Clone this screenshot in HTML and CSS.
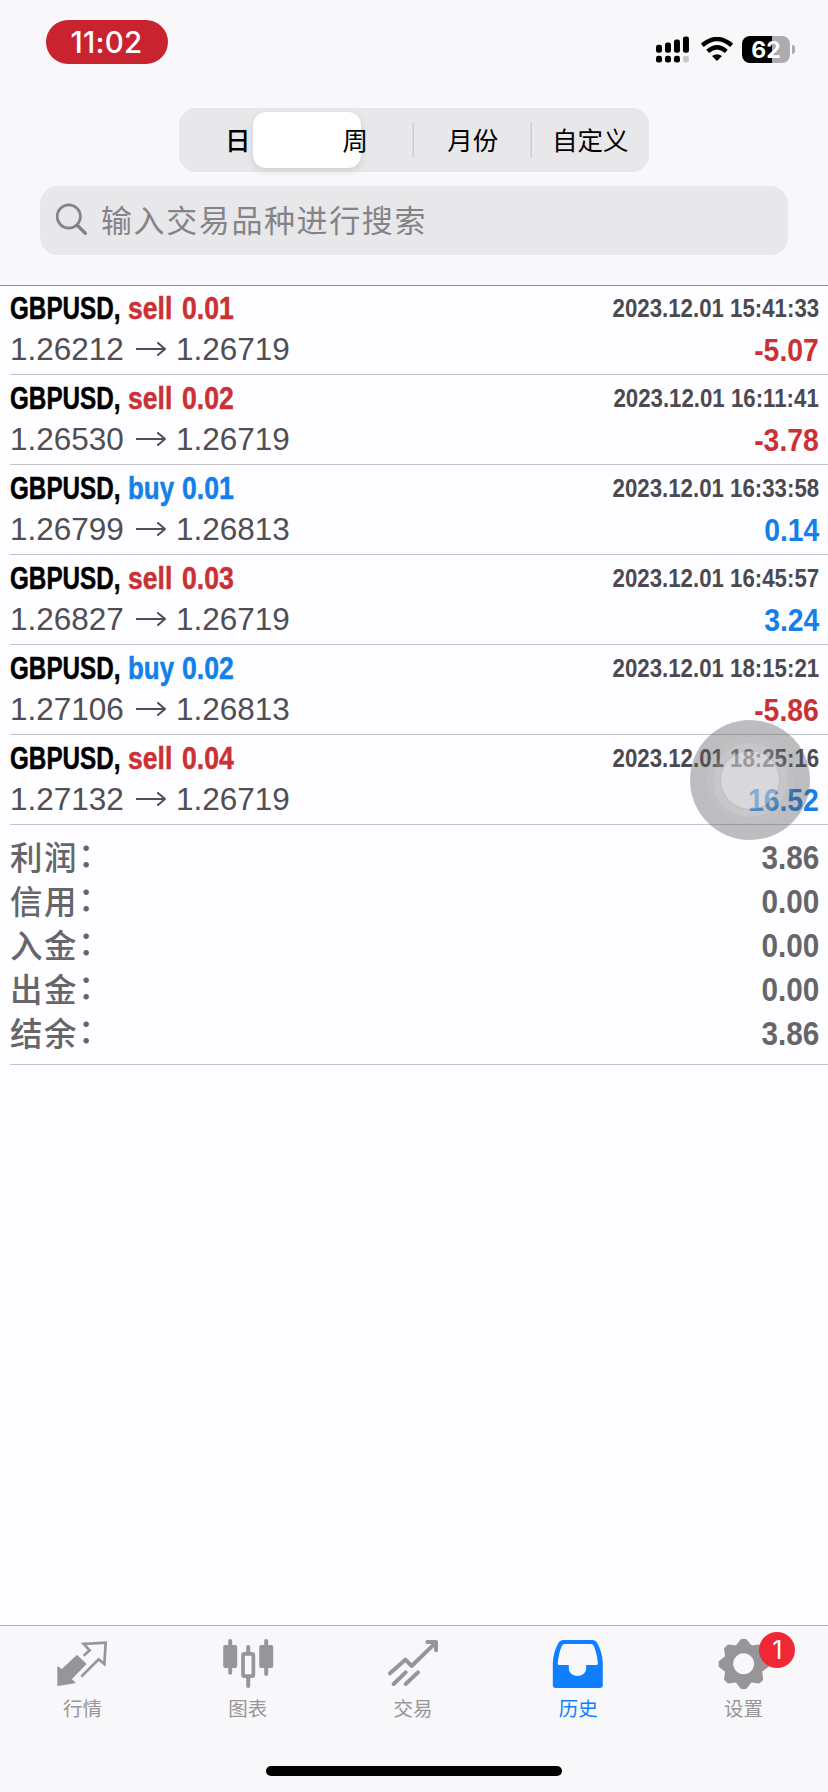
FILE: index.html
```html
<!DOCTYPE html>
<html lang="zh-CN">
<head>
<meta charset="utf-8">
<title>历史</title>
<link rel="stylesheet" href="styles.css">
</head>
<body>
<div class="screen">
  <header class="top">
    <div class="status">
      <div class="clock">11:02</div>
      <div class="indicators">
        <svg class="signal" viewBox="0 0 100 80">
          <g><rect x="0" y="26" width="18" height="24" rx="7"/><rect x="27" y="19" width="18" height="31" rx="7"/><rect x="54" y="10" width="18" height="40" rx="7"/><rect x="81" y="1" width="18" height="49" rx="7"/>
          <rect x="0" y="59" width="18" height="20" rx="7"/><rect x="27" y="59" width="18" height="20" rx="7"/><rect x="54" y="59" width="18" height="20" rx="7"/></g><rect x="81" y="59" width="18" height="20" rx="8" fill="#c9c7cb"/>
        </svg>
        <svg class="wifi" viewBox="0 0 96 72"><g fill="none" stroke="#000" stroke-width="13"><path d="M4 25Q48-13 92 25"/><path d="M20 43Q48 18 76 43"/></g><path d="M48 72L33 57Q48 46 63 57Z"/></svg>
        <div class="battery">62</div>
        <div class="battery-cap"></div>
      </div>
    </div>
    <div class="segments">
      <div class="thumb"></div>
      <div class="seg seg-on">日</div><div class="seg">周</div><div class="seg seg-line">月份</div><div class="seg seg-line">自定义</div>
    </div>
    <div class="search">
      <svg class="lens" viewBox="0 0 92 92"><circle cx="38" cy="37" r="34.500"/><path d="M63 63L87 87" stroke-width="10"/></svg>
      <span>输入交易品种进行搜索</span>
    </div>
  </header>
  <main class="list">
    <div class="deal"><div class="title"><b class="sym">GBPUSD,</b><b class="side sell">sell</b><b class="lot sell">0.01</b></div><div class="date">2023.12.01 15:41:33</div><div class="price">1.26212<svg class="arrow" viewBox="0 0 30 14"><path d="M0 7H29M22 1L29 7L22 13"/></svg>1.26719</div><div class="sum sell">-5.07</div></div>
    <div class="deal"><div class="title"><b class="sym">GBPUSD,</b><b class="side sell">sell</b><b class="lot sell">0.02</b></div><div class="date">2023.12.01 16:11:41</div><div class="price">1.26530<svg class="arrow" viewBox="0 0 30 14"><path d="M0 7H29M22 1L29 7L22 13"/></svg>1.26719</div><div class="sum sell">-3.78</div></div>
    <div class="deal"><div class="title"><b class="sym">GBPUSD,</b><b class="side side-buy buy">buy</b><b class="lot buy">0.01</b></div><div class="date">2023.12.01 16:33:58</div><div class="price">1.26799<svg class="arrow" viewBox="0 0 30 14"><path d="M0 7H29M22 1L29 7L22 13"/></svg>1.26813</div><div class="sum buy">0.14</div></div>
    <div class="deal"><div class="title"><b class="sym">GBPUSD,</b><b class="side sell">sell</b><b class="lot sell">0.03</b></div><div class="date">2023.12.01 16:45:57</div><div class="price">1.26827<svg class="arrow" viewBox="0 0 30 14"><path d="M0 7H29M22 1L29 7L22 13"/></svg>1.26719</div><div class="sum buy">3.24</div></div>
    <div class="deal"><div class="title"><b class="sym">GBPUSD,</b><b class="side side-buy buy">buy</b><b class="lot buy">0.02</b></div><div class="date">2023.12.01 18:15:21</div><div class="price">1.27106<svg class="arrow" viewBox="0 0 30 14"><path d="M0 7H29M22 1L29 7L22 13"/></svg>1.26813</div><div class="sum sell">-5.86</div></div>
    <div class="deal"><div class="title"><b class="sym">GBPUSD,</b><b class="side sell">sell</b><b class="lot sell">0.04</b></div><div class="date">2023.12.01 18:25:16</div><div class="price">1.27132<svg class="arrow" viewBox="0 0 30 14"><path d="M0 7H29M22 1L29 7L22 13"/></svg>1.26719</div><div class="sum buy">16.52</div></div>
    <div class="totals">
      <div class="total"><span>利润<i>：</i></span><b>3.86</b></div>
      <div class="total"><span>信用<i>：</i></span><b>0.00</b></div>
      <div class="total"><span>入金<i>：</i></span><b>0.00</b></div>
      <div class="total"><span>出金<i>：</i></span><b>0.00</b></div>
      <div class="total"><span>结余<i>：</i></span><b>3.86</b></div>
    </div>
  </main>
  <footer class="bottom">
    <nav class="tabs">
      <div class="tab">
        <svg class="icon" viewBox="164 78 168 168"><path fill="currentColor" stroke="currentColor" stroke-width="4" stroke-linejoin="round" d="M173 171L184 180L230 137L256 162L212 207L223 218L173 226Z"/><path fill="none" stroke="currentColor" stroke-width="8" d="M250 137L268 121L250 102L316 98L312 162L295 148L243 200"/></svg>
        <span>行情</span></div>
      <div class="tab">
        <svg class="icon" viewBox="659.4 78 168 168"><g fill="currentColor"><rect x="669" y="105" width="42" height="69" rx="6"/><rect x="777" y="105" width="42" height="69" rx="6"/><rect x="684" y="87" width="12" height="107" rx="6"/><rect x="792" y="87" width="12" height="111" rx="6"/><rect x="738" y="105" width="12" height="26" rx="6"/><rect x="738" y="198" width="12" height="36" rx="6"/></g><rect x="728.5" y="131.500" width="31" height="67" rx="4" fill="none" stroke="currentColor" stroke-width="11"/></svg>
        <span>图表</span></div>
      <div class="tab">
        <svg class="icon" viewBox="1155 78 168 168"><g fill="none" stroke="currentColor" stroke-width="12" stroke-linecap="round" stroke-linejoin="round"><path d="M1170 190L1216 149L1235 168L1308 97M1282 96H1308V121"/><path d="M1181 222L1217 187M1217 222L1254 187"/></g></svg>
        <span>交易</span></div>
      <div class="tab tab-on">
        <svg class="icon" viewBox="408.6 78 168 168"><path fill="currentColor" fill-rule="evenodd" d="M449 90H536Q546 90 550 98Q567 130 567 160V225Q567 234 558 234H426Q417 234 417 225V160Q417 130 434 98Q439 90 449 90ZM453 102Q447 102 444 108Q435 128 432 158Q431 165 438 165H465V174C465 206 517 206 517 174V165H546Q553 165 552 158Q549 128 540 108Q537 102 531 102Z"/></svg>
        <span>历史</span></div>
      <div class="tab">
        <svg class="icon" viewBox="904 78 168 168"><g fill="currentColor"><path fill-rule="evenodd" d="M990 101a60 60 0 1 0 .1 0ZM990 130a31.500 31.500 0 1 1-.1 0Z"/><g id="teeth"><path id="tooth" stroke="currentColor" stroke-width="10" stroke-linejoin="round" d="M972 108L984 92H996L1008 108Z"/><use href="#tooth" transform="rotate(45 990 162)"/><use href="#tooth" transform="rotate(90 990 162)"/><use href="#tooth" transform="rotate(135 990 162)"/></g><use href="#teeth" transform="rotate(180 990 162)"/></g></svg>
        <i class="badge">1</i>
        <span>设置</span></div>
    </nav>
    <div class="home"></div>
  </footer>
  <div class="touch"><div class="ring"><div class="ring ring-mid"><div class="ring ring-core"></div></div></div></div>
</div>
</body>
</html>
```
FILE: styles.css
```css
* { box-sizing: border-box; }
body { margin: 0; background: #fefdff; font-family: "Liberation Sans", "Noto Sans CJK SC", sans-serif; }
.screen { position: relative; width: 828px; height: 1792px; display: flex; flex-direction: column; overflow: hidden; }
.top { height: 286px; background: #f8f7fa; border-bottom: 1px solid #8f8c92; }
.status { height: 108px; display: flex; justify-content: space-between; padding: 20px 33px 0 46px; }
.clock { width: 122px; height: 44px; border-radius: 22px; background: #c8232f; color: #fff; font: 500 29.500px/45px Inter, sans-serif; text-align: center; padding-right: 1px; letter-spacing: .3px; }
.indicators { display: flex; align-items: flex-start; padding-top: 16px; }
.signal { width: 33.3px; height: 27px; margin-right: 11.500px; }
.wifi { width: 32px; height: 24px; margin: 1px 9px 0 0; }
.battery { width: 48px; height: 27px; border-radius: 8px; background: linear-gradient(90deg, #000 30px, #adabb0 30px); color: #fff; font: 700 23px/28px Inter, sans-serif; text-align: center; }
.battery-cap { width: 3px; height: 9px; margin: 9px 0 0 2px; border-radius: 0 4px 4px 0; background: #adabb0; }
.segments { position: relative; width: 470px; height: 64px; margin-left: 179px; border-radius: 17px; background: #e8e7ea; display: flex; align-items: center; }
.thumb { position: absolute; left: 74px; top: 4px; width: 108px; height: 56px; border-radius: 13px; background: #fff; box-shadow: 0 3px 9px rgba(0,0,0,.11); }
.seg { position: relative; flex: 1; height: 36px; font: 400 25.500px/34px "Noto Sans CJK SC", sans-serif; text-align: center; color: #000; }
.seg-on { font-weight: 500; }
.seg-line { box-shadow: -1.500px 0 0 #cfced2; }
.search { width: 748px; height: 69px; margin: 14px 0 0 40px; border-radius: 18px; background: #e8e7ea; display: flex; align-items: center; gap: 14.500px; padding-left: 15.500px; font: 400 31px/66px "Noto Sans CJK SC", sans-serif; letter-spacing: 1.600px; color: #858388; }
.search span { padding-bottom: 4px; }
.lens { width: 31px; height: 31px; fill: none; stroke: #858388; stroke-width: 8; stroke-linecap: round; margin-top: -2px; overflow: visible; }
.list { flex: 1; padding-left: 10px; }
.deal { height: 90px; border-bottom: 1px solid #c4c3c8; display: grid; grid-template-columns: 1fr auto; grid-template-rows: 43px 38px; padding-top: 1px; padding-right: 9px; }
.deal:first-child { height: 89px; padding-top: 0; }
.title { display: flex; font-size: 32px; line-height: 45px; }
.title b { transform-origin: 0 50%; white-space: nowrap; -webkit-text-stroke: .5px currentColor; }
.sym { width: 118px; transform: scaleX(.758); }
.side { width: 54px; transform: scaleX(.83); }
.side-buy { transform: scaleX(.81); }
.lot { width: 60px; transform: scaleX(.83); }
.sell { color: #cb3134; }
.buy { color: #1280e8; }
.date { justify-self: end; transform: scaleX(.89); transform-origin: 100% 50%; font-size: 25px; line-height: 45px; font-weight: 700; color: #4b4a50; white-space: nowrap; }
.price { display: flex; align-items: center; font-size: 31.500px; line-height: 38px; padding-top: 1px; color: #4f4e54; }
.arrow { width: 30px; height: 14px; margin: 0 10px 0 12px; fill: none; stroke: #4f4e54; stroke-width: 2; stroke-linecap: round; stroke-linejoin: round; }
.sum { justify-self: end; transform: scaleX(.9); transform-origin: 100% 50%; font-size: 31.500px; line-height: 42px; font-weight: 700; }
.totals { height: 240px; border-bottom: 1px solid #c4c3c8; padding: 9px 9px 0 0; }
.total { height: 44px; display: flex; justify-content: space-between; line-height: 44px; color: #666569; }
.total span { font: 500 32.500px/44px "Noto Sans CJK SC", sans-serif; letter-spacing: 1.500px; }
.total i { display: inline-block; font-style: normal; transform: translate(0, -3px); }
.total b { transform: scaleX(.9); transform-origin: 100% 50%; font-size: 33px; line-height: 48px; }
.bottom { height: 167px; background: #f8f7fa; border-top: 1px solid #b0aeb2; }
.tabs { display: flex; height: 140px; padding: 10px 2px 0 0; }
.tab { position: relative; flex: 1; display: flex; flex-direction: column; align-items: center; color: #979598; font: 400 19.500px/28px "Noto Sans CJK SC", sans-serif; }
.tab-on { color: #0f7fff; }
.icon { width: 56px; height: 56px; }
.tab span { margin-top: 2px; }
.badge { position: absolute; left: calc(50% + 16px); top: -4px; width: 36px; height: 36px; border-radius: 50%; background: #f02735; color: #fff; font: 400 25px/36px Inter, sans-serif; text-align: center; }
.home { width: 296px; height: 10px; margin-left: 266px; border-radius: 5px; background: #000; }
.touch { position: absolute; left: 690px; top: 720px; width: 120px; height: 120px; border-radius: 50%; background: rgba(92,90,96,.4); display: grid; place-items: center; }
.ring { width: 88px; height: 88px; border-radius: 50%; background: rgba(255,255,255,.06); display: grid; place-items: center; }
.ring-mid { width: 74px; height: 74px; background: rgba(255,255,255,.12); }
.ring-core { width: 58px; height: 58px; background: rgba(255,255,255,.3); box-shadow: 0 0 2px rgba(90,90,95,.2); }
```
